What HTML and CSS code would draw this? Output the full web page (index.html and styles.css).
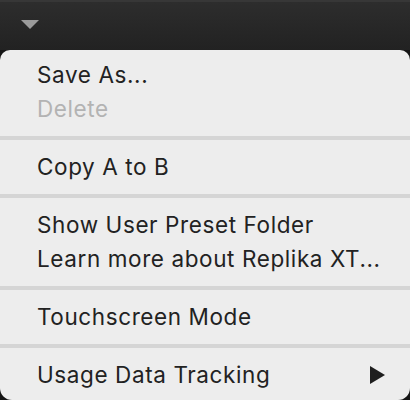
FILE: index.html
```html
<!DOCTYPE html>
<html>
<head>
<meta charset="utf-8">
<link rel="stylesheet" href="styles.css">
</head>
<body>
<div class="topbar">
  <span class="caret"></span>
</div>
<div class="menu-wrap">
  <div class="menu">
    <div class="item">Save As...</div>
    <div class="item disabled">Delete</div>
    <div class="sep"></div>
    <div class="item">Copy A to B</div>
    <div class="sep"></div>
    <div class="item">Show User Preset Folder</div>
    <div class="item">Learn more about Replika XT...</div>
    <div class="sep"></div>
    <div class="item">Touchscreen Mode</div>
    <div class="sep"></div>
    <div class="item submenu">Usage Data Tracking<span class="arrow"></span></div>
  </div>
</div>
</body>
</html>
```
FILE: styles.css
```css
html, body {
  margin: 0;
  padding: 0;
  width: 410px;
  height: 400px;
  overflow: hidden;
  background: #111;
  font-family: Inter, "Liberation Sans", sans-serif;
}
.topbar {
  height: 50px;
  box-sizing: border-box;
  border-top: 2px solid #373737;
  background: linear-gradient(#2d2d2d, #222);
  padding: 18px 0 0 21px;
}
.caret {
  display: block;
  width: 0;
  height: 0;
  border-left: 9.5px solid transparent;
  border-right: 9.5px solid transparent;
  border-top: 9px solid #9b9b9b;
}
.menu-wrap {
  height: 350px;
  background: #151515;
}
.menu {
  height: 350px;
  box-sizing: border-box;
  background: #ededed;
  border-radius: 10px 10px 12px 12px;
  padding-top: 8px;
}
.item {
  height: 34px;
  line-height: 34px;
  padding-left: 37px;
  padding-right: 25px;
  font-size: 22.5px;
  letter-spacing: 0.6px;
  color: #222;
  display: flex;
  align-items: center;
  justify-content: space-between;
}
.item.disabled {
  color: #b3b3b3;
}
.sep {
  height: 4px;
  background: #d5d5d5;
  margin: 10px 0;
}
.arrow {
  width: 0;
  height: 0;
  border-top: 9px solid transparent;
  border-bottom: 9px solid transparent;
  border-left: 15px solid #1e1e1e;
}
```
